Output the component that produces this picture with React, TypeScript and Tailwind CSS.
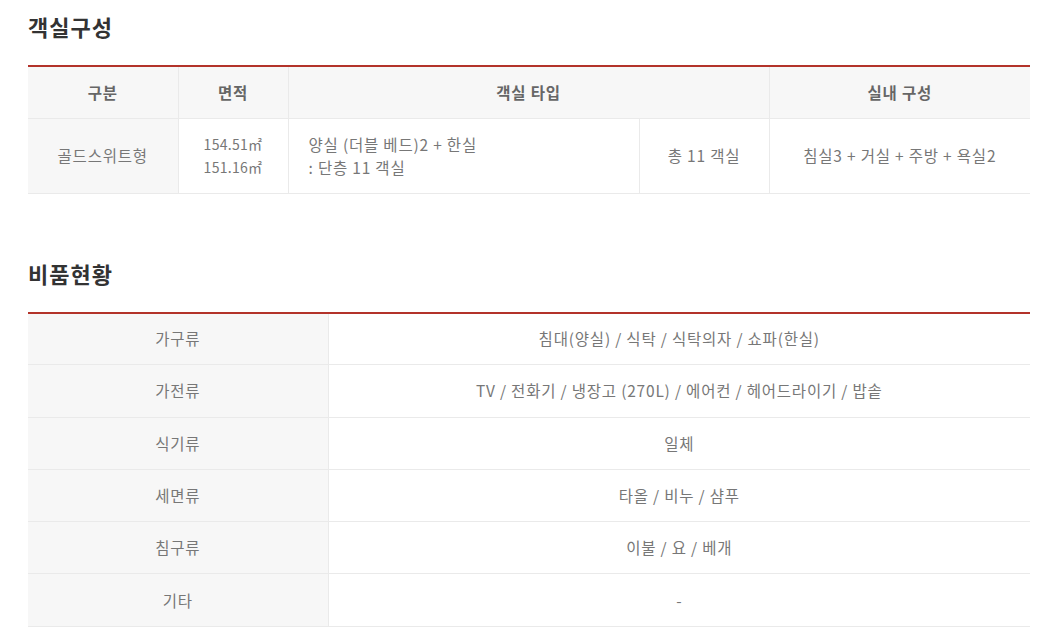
import React from 'react';

const font = { fontFamily: '"Noto Sans CJK KR", "Noto Sans", sans-serif' };

export default function App() {
  const amenities = [
    { label: '가구류', value: '침대(양실) / 식탁 / 식탁의자 / 쇼파(한실)' },
    { label: '가전류', value: 'TV / 전화기 / 냉장고 (270L) / 에어컨 / 헤어드라이기 / 밥솥' },
    { label: '식기류', value: '일체' },
    { label: '세면류', value: '타올 / 비누 / 샴푸' },
    { label: '침구류', value: '이불 / 요 / 베개' },
    { label: '기타', value: '-' },
  ];

  return (
    <div className="bg-white min-h-screen px-[28px] pt-[8px]" style={font}>
      {/* 객실구성 */}
      <h2 className="text-[22px] font-bold text-[#333] leading-[36px] tracking-[1px] mb-[21px]">객실구성</h2>
      <table className="w-[1002px] border-collapse border-t-2 border-t-[#b3332a] text-[15.5px] tracking-[0.8px] text-[#777]">
        <thead>
          <tr className="bg-[#f7f7f7] h-[52px]">
            <th className="w-[150px] font-bold text-[#666] border-b border-[#eaeaea]">구분</th>
            <th className="w-[110px] font-bold text-[#666] border-l border-b border-[#eaeaea]">면적</th>
            <th colSpan={2} className="font-bold text-[#666] border-l border-b border-[#eaeaea]">객실 타입</th>
            <th className="w-[261px] font-bold text-[#666] border-l border-b border-[#eaeaea]">실내 구성</th>
          </tr>
        </thead>
        <tbody>
          <tr className="h-[75px]">
            <td className="bg-[#f7f7f7] text-center border-b border-[#eaeaea]">골드스위트형</td>
            <td className="text-center border-l border-b border-[#eaeaea] leading-[23px] text-[14px] tracking-[0.3px]">
              154.51㎡<br />151.16㎡
            </td>
            <td className="pl-[20px] border-l border-b border-[#eaeaea] leading-[23px]">
              양실 (더블 베드)2 + 한실<br />: 단층 11 객실
            </td>
            <td className="w-[130px] text-center border-l border-b border-[#eaeaea]">총 11 객실</td>
            <td className="text-center border-l border-b border-[#eaeaea]">침실3 + 거실 + 주방 + 욕실2</td>
          </tr>
        </tbody>
      </table>

      {/* 비품현황 */}
      <h2 className="text-[22px] font-bold text-[#333] leading-[36px] tracking-[1px] mt-[61px] mb-[21px]">비품현황</h2>
      <table className="w-[1002px] border-collapse border-t-2 border-t-[#b3332a] text-[15.5px] tracking-[0.8px] text-[#777]">
        <tbody>
          {amenities.map((row) => (
            <tr key={row.label} className="h-[52.3px]">
              <td className="w-[300px] bg-[#f7f7f7] text-center border-b border-[#eaeaea]">{row.label}</td>
              <td className="text-center border-l border-b border-[#eaeaea]">{row.value}</td>
            </tr>
          ))}
        </tbody>
      </table>
    </div>
  );
}
